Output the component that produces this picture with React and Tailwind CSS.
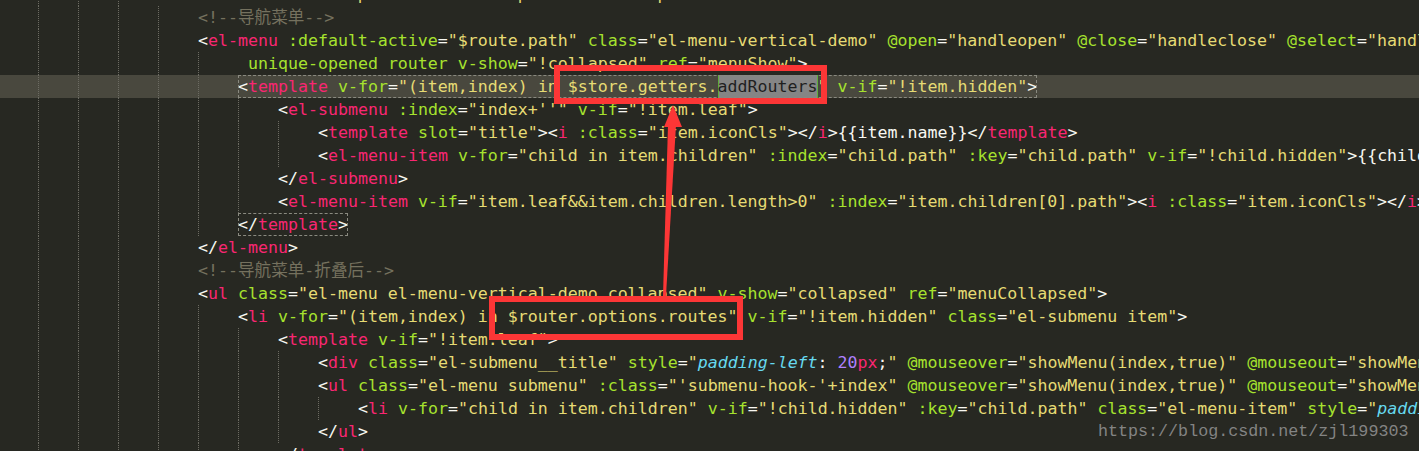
import React from "react";

// token colours (monokai)
const tone = {
  p: "text-[#f8f8f2]",
  t: "text-[#f92672]",
  a: "text-[#a6e22e]",
  s: "text-[#e6db74]",
  c: "text-[#75715e]",
  i: "text-[#66d9ef] italic",
  n: "text-[#ae81ff]",
  k: "text-[#f92672]",
  sel: "inline-block h-[23px] bg-[#858585] text-[#1f1f1f] shadow-[inset_1px_0_0_#5fae3c,inset_-1px_0_0_#5fae3c]",
};

const lines = [
  { col: 12, segs: [["p", "<"], ["t", "aside"], ["p", " "], ["a", ":class"], ["p", "="], ["s", "\"collapsed?'menu-collapsed':'menu-expanded'\""], ["p", ">"]] },
  { col: 16, segs: [["c", "<!--导航菜单-->"]] },
  {
    col: 16,
    segs: [
      ["p", "<"], ["t", "el-menu"], ["p", " "], ["a", ":default-active"], ["p", "="], ["s", "\"$route.path\""], ["p", " "],
      ["a", "class"], ["p", "="], ["s", "\"el-menu-vertical-demo\""], ["p", " "], ["a", "@open"], ["p", "="], ["s", "\"handleopen\""], ["p", " "],
      ["a", "@close"], ["p", "="], ["s", "\"handleclose\""], ["p", " "], ["a", "@select"], ["p", "="], ["s", "\"handleselect\""],
    ],
  },
  { col: 21, segs: [["a", "unique-opened"], ["p", " "], ["a", "router"], ["p", " "], ["a", "v-show"], ["p", "="], ["s", "\"!collapsed\""], ["p", " "], ["a", "ref"], ["p", "="], ["s", "\"menuShow\""], ["p", ">"]] },
  {
    col: 20,
    hl: true,
    box: true,
    segs: [
      ["p", "<"], ["t", "template"], ["p", " "], ["a", "v-for"], ["p", "="], ["s", "\"(item,index) in $store.getters."], ["sel", "addRouters"], ["s", "\""], ["p", " "],
      ["a", "v-if"], ["p", "="], ["s", "\"!item.hidden\""], ["p", ">"],
    ],
  },
  { col: 24, segs: [["p", "<"], ["t", "el-submenu"], ["p", " "], ["a", ":index"], ["p", "="], ["s", "\"index+''\""], ["p", " "], ["a", "v-if"], ["p", "="], ["s", "\"!item.leaf\""], ["p", ">"]] },
  {
    col: 28,
    segs: [
      ["p", "<"], ["t", "template"], ["p", " "], ["a", "slot"], ["p", "="], ["s", "\"title\""], ["p", "><"], ["t", "i"], ["p", " "], ["a", ":class"], ["p", "="],
      ["s", "\"item.iconCls\""], ["p", "></"], ["t", "i"], ["p", ">{{item.name}}</"], ["t", "template"], ["p", ">"],
    ],
  },
  {
    col: 28,
    segs: [
      ["p", "<"], ["t", "el-menu-item"], ["p", " "], ["a", "v-for"], ["p", "="], ["s", "\"child in item.children\""], ["p", " "], ["a", ":index"], ["p", "="],
      ["s", "\"child.path\""], ["p", " "], ["a", ":key"], ["p", "="], ["s", "\"child.path\""], ["p", " "], ["a", "v-if"], ["p", "="], ["s", "\"!child.hidden\""],
      ["p", ">{{child.name}}</"], ["t", "el-menu-item"], ["p", ">"],
    ],
  },
  { col: 24, segs: [["p", "</"], ["t", "el-submenu"], ["p", ">"]] },
  {
    col: 24,
    segs: [
      ["p", "<"], ["t", "el-menu-item"], ["p", " "], ["a", "v-if"], ["p", "="], ["s", "\"item.leaf&&item.children.length>0\""], ["p", " "], ["a", ":index"], ["p", "="],
      ["s", "\"item.children[0].path\""], ["p", "><"], ["t", "i"], ["p", " "], ["a", ":class"], ["p", "="], ["s", "\"item.iconCls\""], ["p", "></"], ["t", "i"],
      ["p", ">{{item.children[0].name}}</"], ["t", "el-menu-item"], ["p", ">"],
    ],
  },
  { col: 20, box: true, segs: [["p", "</"], ["t", "template"], ["p", ">"]] },
  { col: 16, segs: [["p", "</"], ["t", "el-menu"], ["p", ">"]] },
  { col: 16, segs: [["c", "<!--导航菜单-折叠后-->"]] },
  {
    col: 16,
    segs: [
      ["p", "<"], ["t", "ul"], ["p", " "], ["a", "class"], ["p", "="], ["s", "\"el-menu el-menu-vertical-demo collapsed\""], ["p", " "], ["a", "v-show"], ["p", "="],
      ["s", "\"collapsed\""], ["p", " "], ["a", "ref"], ["p", "="], ["s", "\"menuCollapsed\""], ["p", ">"],
    ],
  },
  {
    col: 20,
    segs: [
      ["p", "<"], ["t", "li"], ["p", " "], ["a", "v-for"], ["p", "="], ["s", "\"(item,index) in $router.options.routes\""], ["p", " "], ["a", "v-if"], ["p", "="],
      ["s", "\"!item.hidden\""], ["p", " "], ["a", "class"], ["p", "="], ["s", "\"el-submenu item\""], ["p", ">"],
    ],
  },
  { col: 24, segs: [["p", "<"], ["t", "template"], ["p", " "], ["a", "v-if"], ["p", "="], ["s", "\"!item.leaf\""], ["p", ">"]] },
  {
    col: 28,
    segs: [
      ["p", "<"], ["t", "div"], ["p", " "], ["a", "class"], ["p", "="], ["s", "\"el-submenu__title\""], ["p", " "], ["a", "style"], ["p", "="], ["s", "\""],
      ["i", "padding-left"], ["p", ": "], ["n", "20"], ["k", "px"], ["p", ";"], ["s", "\""], ["p", " "], ["a", "@mouseover"], ["p", "="],
      ["s", "\"showMenu(index,true)\""], ["p", " "], ["a", "@mouseout"], ["p", "="], ["s", "\"showMenu(index,false)\""], ["p", ">"],
    ],
  },
  {
    col: 28,
    segs: [
      ["p", "<"], ["t", "ul"], ["p", " "], ["a", "class"], ["p", "="], ["s", "\"el-menu submenu\""], ["p", " "], ["a", ":class"], ["p", "="],
      ["s", "\"'submenu-hook-'+index\""], ["p", " "], ["a", "@mouseover"], ["p", "="], ["s", "\"showMenu(index,true)\""], ["p", " "], ["a", "@mouseout"], ["p", "="],
      ["s", "\"showMenu(index,false)\""], ["p", ">"],
    ],
  },
  {
    col: 32,
    segs: [
      ["p", "<"], ["t", "li"], ["p", " "], ["a", "v-for"], ["p", "="], ["s", "\"child in item.children\""], ["p", " "], ["a", "v-if"], ["p", "="], ["s", "\"!child.hidden\""],
      ["p", " "], ["a", ":key"], ["p", "="], ["s", "\"child.path\""], ["p", " "], ["a", "class"], ["p", "="], ["s", "\"el-menu-item\""], ["p", " "], ["a", "style"],
      ["p", "="], ["s", "\""], ["i", "padding-left"], ["p", ": "], ["n", "40"], ["k", "px"], ["p", ";"], ["s", "\""],
    ],
  },
  { col: 28, segs: [["p", "</"], ["t", "ul"], ["p", ">"]] },
  { col: 24, segs: [["p", "</"], ["t", "template"], ["p", ">"]] },
];

function Line({ line }) {
  const levels = Math.floor(line.col / 4);
  const extra = line.col % 4;
  return (
    <div className={`flex h-[23px] leading-[23px] whitespace-pre ${line.hl ? "bg-[#49483e]" : ""}`}>
      <span className="w-[38px] shrink-0" />
      {Array.from({ length: levels }).map((_, i) => (
        <span key={i} className="w-[40px] shrink-0 border-l border-dotted border-[#6c6b62]" />
      ))}
      {extra === 1 && <span className="w-[10px] shrink-0" />}
      <span className={`shrink-0 ${line.box ? "outline-1 outline-dashed outline-[#8a8a80] -outline-offset-1" : ""}`}>
        {line.segs.map(([k, text], i) => (
          <span key={i} className={tone[k]}>
            {text}
          </span>
        ))}
      </span>
    </div>
  );
}

export default function App() {
  return (
    <div className="relative w-[1419px] h-[451px] overflow-hidden bg-[#272822] font-['DejaVu_Sans_Mono','Noto_Sans_CJK_SC',monospace] text-[16.6px]">
      <div className="-mt-[17px]">
        {lines.map((line, i) => (
          <Line key={i} line={line} />
        ))}
      </div>

      {/* annotations */}
      <div className="absolute left-[554px] top-[65px] w-[273px] h-[39px] border-[6px] border-[#fc3636]" />
      <div className="absolute left-[489px] top-[296px] w-[254px] h-[44px] border-[6px] border-[#fc3636]" />
      <svg className="absolute left-0 top-0 pointer-events-none" width="1419" height="451">
        <polygon points="673,105 664,127 682,127" fill="#fc3636" />
        <polygon points="668,125 676,125 666,296 663,296" fill="#fc3636" />
      </svg>

      <div className="absolute left-[1098px] top-[419px] font-['Liberation_Mono',monospace] text-[16.7px] text-[#8e8e8e] opacity-90">
        https://blog.csdn.net/zjl199303
      </div>
    </div>
  );
}
